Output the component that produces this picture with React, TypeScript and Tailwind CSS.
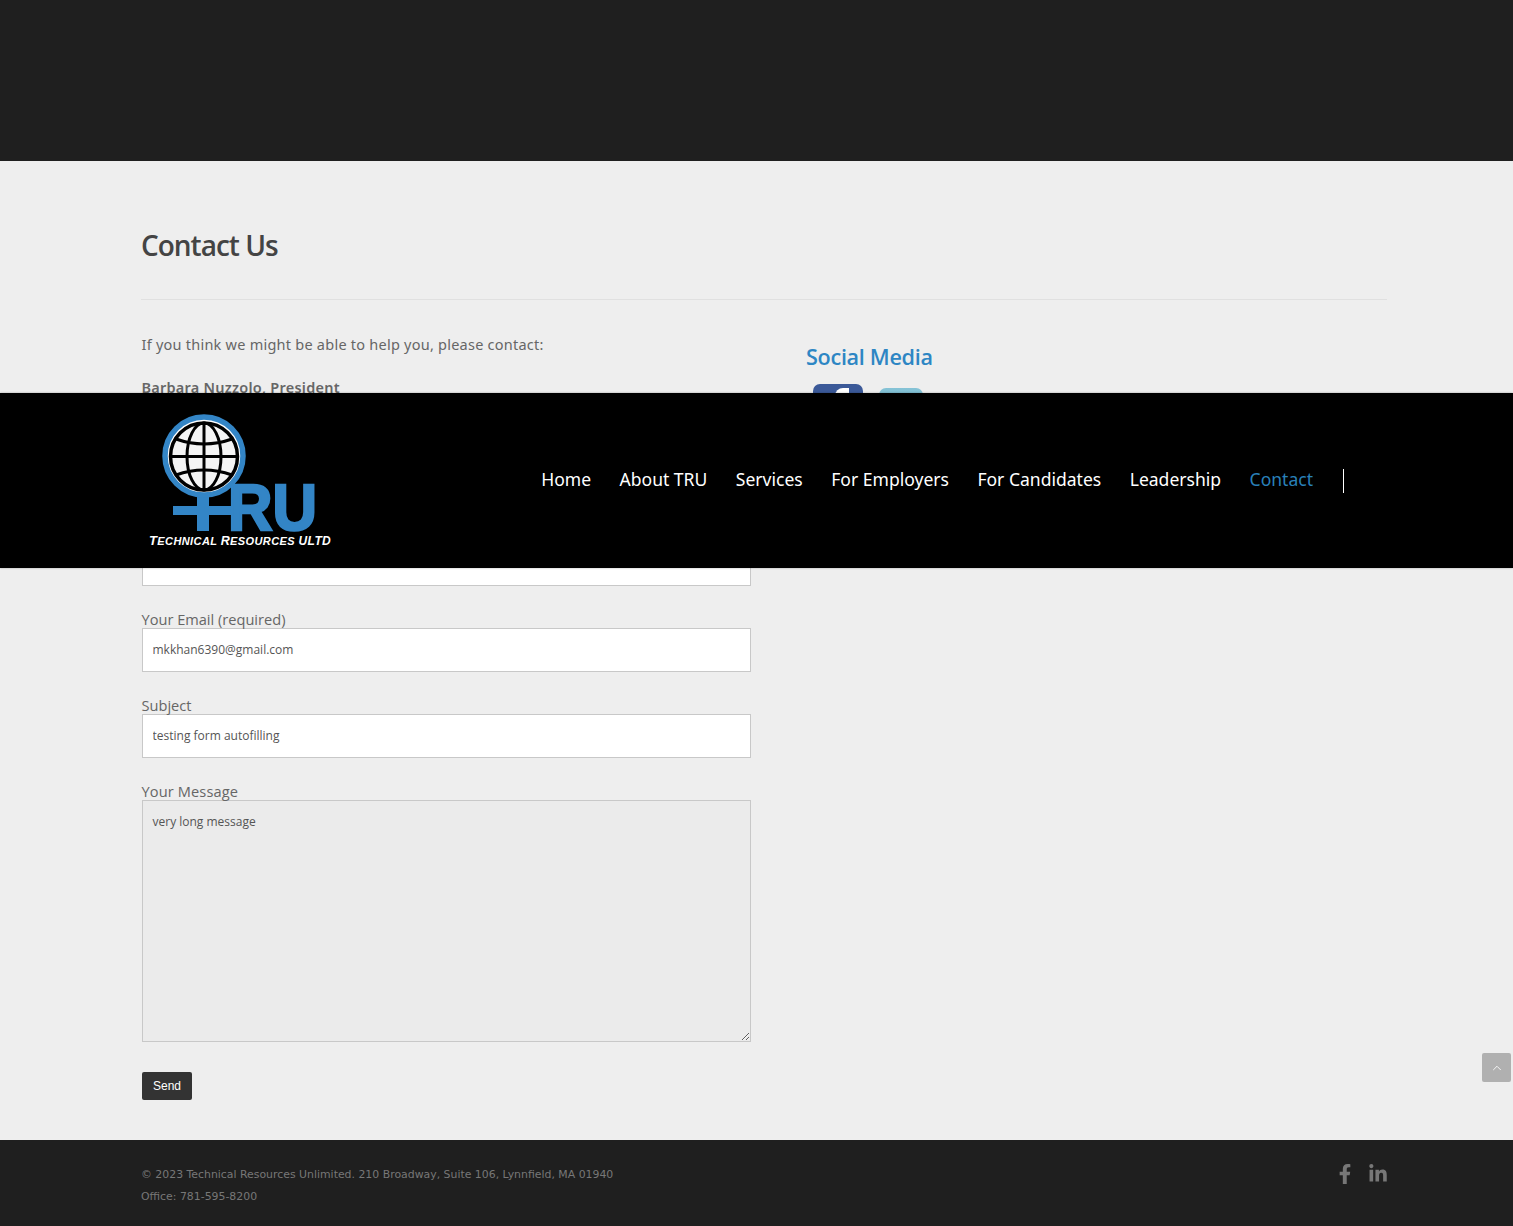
import React from 'react';
import { ChevronUp } from 'lucide-react';
import { FaFacebookF, FaLinkedinIn } from 'react-icons/fa';

const navItems = ['Home', 'About TRU', 'Services', 'For Employers', 'For Candidates', 'Leadership', 'Contact'];

const globeLines = ['M204 423 V490', 'M171 456.5 H237', 'M176 439 Q204 449 232 439', 'M176 475 Q204 465 232 475'];

const Logo = () => (
  <svg width="200" height="175" viewBox="140 393 200 175" className="block">
    <rect x="197" y="490" width="12" height="41" fill="#3385c6" />
    <rect x="173" y="506" width="60" height="9" fill="#3385c6" />
    <circle cx="204" cy="456" r="39" fill="#fff" stroke="#3385c6" strokeWidth="5.5" />
    <circle cx="204" cy="456.5" r="33.5" fill="#f4f4f4" stroke="#000" strokeWidth="3.5" />
    <ellipse cx="204" cy="456.5" rx="17" ry="33.5" fill="none" stroke="#000" strokeWidth="3" />
    {globeLines.map((d) => (
      <path key={d} d={d} fill="none" stroke="#000" strokeWidth="3" />
    ))}
    <text x="228" y="530" textLength="89" lengthAdjust="spacingAndGlyphs" fill="#3385c6" stroke="#3385c6" strokeWidth="2.5" fontFamily="'Liberation Sans', sans-serif" fontWeight="700" fontSize="64">
      RU
    </text>
    <text x="149" y="545" letterSpacing="0.4" fill="#fff" fontFamily="'Liberation Sans', sans-serif" fontWeight="700" fontStyle="italic" fontSize="11">
      <tspan fontSize="13">T</tspan>ECHNICAL <tspan fontSize="12.5">R</tspan>ESOURCES <tspan fontSize="12">ULTD</tspan>
    </text>
  </svg>
);

const Field = ({ label, value, className }: { label: string; value: string; className: string }) => (
  <div className={className}>
    <label className="block pl-[0.5px] text-[14.6px] leading-[18px] text-[#666]">{label}</label>
    <input
      readOnly
      value={value}
      className="ml-px block h-[44px] w-[609px] bg-white pl-[9.5px] pr-[10px] pb-[2px] text-[12px] text-[#555] border border-[#c8c8c8] outline-none"
    />
  </div>
);

export default function App() {
  return (
    <div className="relative h-[1226px] overflow-hidden bg-[#eeeeee] font-['Open_Sans',sans-serif]">
      <div className="h-[161px] bg-[#1f1f1f]" />

      <main className="mx-[126px] box-content h-[979px] w-[1246px] pl-[15px]">
        <h1 className="pt-[66px] text-[28px] leading-[36px] font-semibold tracking-[-1px] text-[#444]">Contact Us</h1>
        <hr className="mt-[36px] border-[#e0e0e0]" />

        <div className="flex">
          <div className="w-[665px]">
            <p className="mt-[34px] pl-[0.5px] text-[14.5px] leading-[20px] tracking-[0.24px] text-[#666] font-['Noto_Sans',sans-serif]">
              If you think we might be able to help you, please contact:
            </p>
            <p className="mt-[23px] pl-[0.5px] text-[14.5px] leading-[20px] tracking-[0.24px] font-semibold text-[#666] font-['Noto_Sans',sans-serif]">
              Barbara Nuzzolo, President
            </p>
            <Field label="Your Name (required)" value="" className="mt-[127px]" />
            <Field label="Your Email (required)" value="mkkhan6390@gmail.com" className="mt-[24px]" />
            <Field label="Subject" value="testing form autofilling" className="mt-[24px]" />
            <div className="mt-[24px]">
              <label className="block pl-[0.5px] text-[14.6px] leading-[18px] tracking-[0.12px] text-[#666]">Your Message</label>
              <textarea
                readOnly
                value="very long message"
                className="ml-px block h-[242px] w-[609px] bg-[#ebebeb] pl-[9.5px] pr-[10px] py-[12px] text-[12px] leading-[18px] text-[#555] border border-[#c8c8c8] outline-none"
              />
            </div>
            <button className="mt-[30px] ml-px block h-[28px] w-[50px] rounded-[2px] bg-[#333] text-[12px] text-white font-['Liberation_Sans',sans-serif]">
              Send
            </button>
          </div>

          <div>
            <h2 className="mt-[41px] text-[21.6px] leading-[32px] font-semibold tracking-[-0.3px] text-[#2d86c4]">Social Media</h2>
            <div className="mt-[11px] ml-[7px] flex items-start gap-[16px]">
              <div className="relative h-[50px] w-[50px] overflow-hidden rounded-[7px] bg-[#3b5998]">
                <div className="absolute left-[22px] top-[4px] h-[30px] w-[14px] rounded-tl-[8px] bg-white" />
              </div>
              <div className="mt-[4px] h-[44px] w-[44px] rounded-[7px] bg-gradient-to-b from-[#86c3d6] to-[#5aa8c5]" />
            </div>
          </div>
        </div>
      </main>

      <footer className="flex h-[86px] justify-between bg-[#1f1f1f] pl-[141px] pr-[125px] pt-[24px]">
        <div className="text-[10.9px] leading-[22px] text-[#777] font-['DejaVu_Sans',sans-serif]">
          <p>© 2023 Technical Resources Unlimited. 210 Broadway, Suite 106, Lynnfield, MA 01940</p>
          <p>Office: 781-595-8200</p>
        </div>
        <div className="flex items-start gap-[13px] text-[20px] text-[#777]">
          <FaFacebookF />
          <FaLinkedinIn />
        </div>
      </footer>

      {/* sticky header, sits over the page */}
      <header className="absolute left-0 top-[393px] flex h-[175px] w-full items-center bg-black pl-[140px] pr-[169px] shadow-[0_0_2px_rgba(0,0,0,0.3)]">
        <Logo />
        <nav className="ml-auto flex items-center gap-[28.5px] text-[17.55px] text-white font-['Noto_Sans',sans-serif]">
          {navItems.map((item) => (
            <a key={item} className={item === 'Contact' ? 'relative -top-px text-[#2980b9]' : 'relative -top-px'}>
              {item}
            </a>
          ))}
          <span className="ml-[1.5px] mt-px h-[24px] w-px bg-white" />
        </nav>
      </header>

      <button className="absolute left-[1482px] top-[1053px] flex h-[29px] w-[29px] items-center justify-center rounded-[2px] bg-[#b0b0b0] text-white">
        <ChevronUp size={14} strokeWidth={1.5} />
      </button>
    </div>
  );
}
